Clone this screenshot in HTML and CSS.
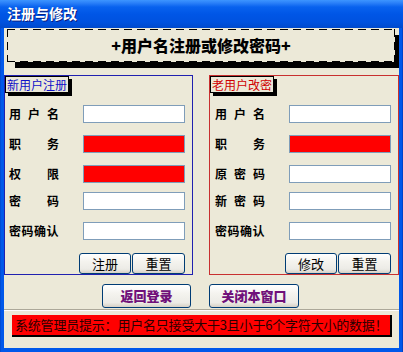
FILE: index.html
```html
<!DOCTYPE html>
<html>
<head>
<meta charset="utf-8">
<link rel="stylesheet" href="styles.css">
</head>
<body>
<div class="win">
  <div class="titlebar">注册与修改</div>
  <div class="frame">
    <div class="client">
      <div class="header">+用户名注册或修改密码+</div>
      <div class="groups">
        <div class="group blue">
          <div class="legend">新用户注册</div>
          <div class="form">
            <div class="row r1"><span class="lbl sp3">用户名</span><input class="inp" type="text"></div>
            <div class="row"><span class="lbl sp2">职务</span><input class="inp red" type="text"></div>
            <div class="row"><span class="lbl sp2">权限</span><input class="inp red" type="text"></div>
            <div class="row r4"><span class="lbl sp2">密码</span><input class="inp" type="text"></div>
            <div class="row"><span class="lbl sp4">密码确认</span><input class="inp" type="text"></div>
          </div>
          <div class="btns"><button class="btn">注册</button><button class="btn">重置</button></div>
        </div>
        <div class="group redg">
          <div class="legend">老用户改密</div>
          <div class="form">
            <div class="row r1"><span class="lbl sp3">用户名</span><input class="inp" type="text"></div>
            <div class="row"><span class="lbl sp2">职务</span><input class="inp red" type="text"></div>
            <div class="row"><span class="lbl sp3">原密码</span><input class="inp" type="text"></div>
            <div class="row r4"><span class="lbl sp3">新密码</span><input class="inp" type="text"></div>
            <div class="row"><span class="lbl sp4">密码确认</span><input class="inp" type="text"></div>
          </div>
          <div class="btns"><button class="btn">修改</button><button class="btn">重置</button></div>
        </div>
      </div>
      <div class="actions">
        <button class="btn big">返回登录</button>
        <button class="btn big">关闭本窗口</button>
      </div>
      <div class="status">
        <div class="msg">系统管理员提示：用户名只接受大于3且小于6个字符大小的数据！</div>
      </div>
    </div>
  </div>
</div>
</body>
</html>
```

FILE: styles.css
```css
* { box-sizing: border-box; }
html, body { margin: 0; padding: 0; }
body {
  width: 403px;
  height: 352px;
  overflow: hidden;
  font-family: "Noto Sans CJK SC", "DejaVu Sans", sans-serif;
  background: #0054E3;
}
.win {
  width: 403px;
  height: 352px;
  display: flex;
  flex-direction: column;
}
.titlebar {
  height: 28px;
  flex: none;
  padding-left: 7px;
  color: #fff;
  font-weight: bold;
  font-size: 14px;
  line-height: 27px;
  text-shadow: 1px 1px 0 #0A1E80;
  background: linear-gradient(180deg, #3D95FF 0px, #2A80F8 3px, #0862EE 7px, #0056E6 14px, #0052DF 22px, #0049CC 28px);
}
.frame {
  flex: 1;
  display: flex;
  padding: 0 4px 4px 4px;
  background: linear-gradient(90deg, #0040C0 0, #0058EA 1px, #0058EA calc(100% - 1px), #0030A8 100%);
}
.client {
  flex: 1;
  background: #ECE9D8;
  overflow: hidden;
  display: flex;
  flex-direction: column;
}
.header {
  margin: 1px 0 0 3px;
  width: 388px;
  height: 33px;
  flex: none;
  text-align: center;
  font-weight: 900;
  font-size: 16px;
  line-height: 32px;
  color: #000;
  background:
    repeating-linear-gradient(90deg, #000 0 8px, transparent 8px 13px) top left / 100% 1px no-repeat,
    repeating-linear-gradient(90deg, #000 0 8px, transparent 8px 13px) bottom left / 100% 1px no-repeat,
    repeating-linear-gradient(180deg, #000 0 8px, transparent 8px 13px) top left / 1px 100% no-repeat,
    repeating-linear-gradient(180deg, #000 0 8px, transparent 8px 13px) top right / 1px 100% no-repeat,
    #ECE9D8;
  box-shadow: 8px 6px 0 #000;
}
.groups {
  margin-top: 13px;
  display: flex;
  gap: 16px;
  flex: none;
}
.group {
  height: 200px;
  border: 1px solid;
  padding-left: 4px;
  display: flex;
  flex-direction: column;
  align-items: flex-start;
}
.group.blue { width: 189px; border-color: #2020B0; }
.group.redg { width: 190px; border-color: #C83030; padding-left: 5px; }
.legend {
  margin-left: -4px;
  height: 17px;
  padding: 0 1px;
  border: 1px solid #000;
  background: #ECE9D8;
  box-shadow: 3px 3px 0 #000;
  font-size: 12px;
  line-height: 15px;
  white-space: nowrap;
}
.group.blue .legend { color: #1010C8; }
.group.redg .legend { color: #D00000; margin-left: -5px; }
.form {
  display: flex;
  flex-direction: column;
  gap: 12px;
  margin-top: 12px;
}
.row {
  display: grid;
  grid-template-columns: 74px 102px;
  align-items: center;
  height: 18px;
}
.row.r4 { margin-top: -3px; }
.lbl {
  font-weight: bold;
  font-size: 12px;
  color: #000;
  white-space: nowrap;
  line-height: 18px;
}
.sp3 { letter-spacing: 7px; }
.sp2 { letter-spacing: 26px; }
.sp4 { letter-spacing: 0.5px; }
.inp {
  width: 102px;
  height: 18px;
  border: 1px solid #7F9DB9;
  background: #fff;
  margin: 0;
  padding: 0;
}
.inp.red { background: #FF0000; }
.btns {
  margin-top: 13px;
  margin-left: 70px;
  display: flex;
  gap: 1px;
}
.btn {
  width: 52px;
  height: 21px;
  margin: 0;
  padding: 0;
  border: 1px solid #003C74;
  border-radius: 3px;
  background: linear-gradient(180deg, #FFFFFF 0%, #F4F3EE 40%, #ECEBE6 80%, #D6D0C5 100%);
  font-family: "Noto Sans CJK SC", sans-serif;
  font-size: 13px;
  line-height: 18px;
  color: #000;
}
.btns .btn + .btn { width: 53px; }
.actions {
  margin-top: 9px;
  padding-left: 98px;
  display: flex;
  gap: 18px;
  flex: none;
}
.btn.big {
  width: 89px;
  height: 24px;
  font-weight: 900;
  font-size: 13px;
  color: #70107A;
}
.btn.big + .btn.big { width: 90px; }
.status {
  flex: 1;
  margin-top: 1px;
  border-top: 1px solid #ACA899;
  box-shadow: inset 0 1px 0 #fff;
  padding: 5px 0 0 8px;
}
.msg {
  width: 380px;
  height: 22px;
  background: #FF0000;
  border-right: 2px solid #000;
  border-bottom: 2px solid #000;
  font-size: 13px;
  letter-spacing: -0.2px;
  line-height: 20px;
  padding-left: 3px;
  color: #2A0000;
  white-space: nowrap;
  overflow: hidden;
}
```
